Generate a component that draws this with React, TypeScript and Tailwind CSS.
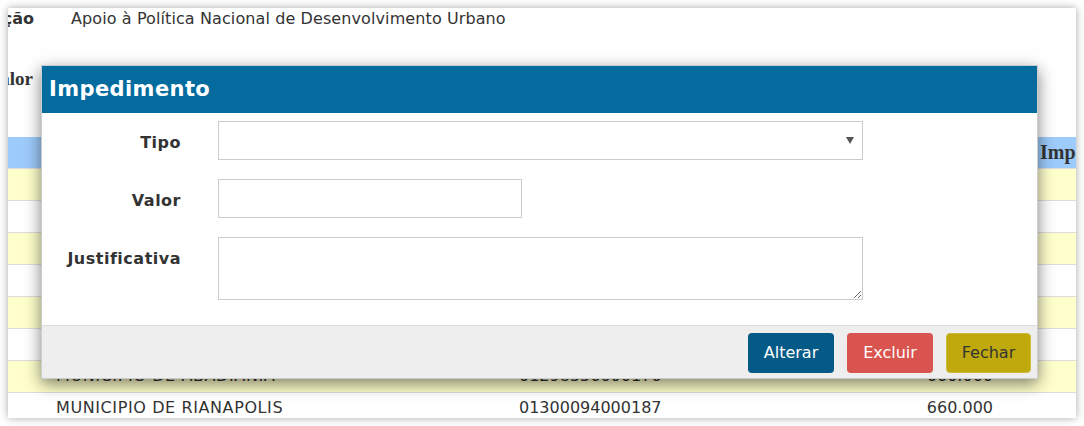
import React from "react";

const rows = [
  { nome: "MUNICIPIO DE ANAPOLIS", cnpj: "01067479000146", valor: "660.000" },
  { nome: "MUNICIPIO DE GOIANIA", cnpj: "01612092000123", valor: "660.000" },
  { nome: "MUNICIPIO DE APARECIDA", cnpj: "01005727000124", valor: "660.000" },
  { nome: "MUNICIPIO DE ITUMBIARA", cnpj: "02204455000199", valor: "660.000" },
  { nome: "MUNICIPIO DE JATAI", cnpj: "01164292000160", valor: "660.000" },
  { nome: "MUNICIPIO DE CATALAO", cnpj: "01505643000150", valor: "660.000" },
  { nome: "MUNICIPIO DE ABADIANIA", cnpj: "01298556000176", valor: "660.000" },
  { nome: "MUNICIPIO DE RIANAPOLIS", cnpj: "01300094000187", valor: "660.000" },
];

function Modal() {
  const label =
    "w-[139px] h-[39px] pt-[4px] flex items-center justify-end font-bold text-[16px] tracking-[0.5px]";
  return (
    <div className="absolute left-[41px] top-[65px] w-[997px] h-[314px] flex flex-col bg-white border border-black/20 shadow-[0_5px_15px_rgba(0,0,0,0.5)]">
      <div className="h-[47px] shrink-0 bg-[#046b9f] flex items-center pl-[7px]">
        <span className="text-white font-bold text-[21px] tracking-[0.4px]">Impedimento</span>
      </div>
      <div className="flex-1 pt-[8px] flex flex-col gap-[19px]">
        <div className="flex">
          <label className={label}>Tipo</label>
          <div className="ml-[37px] w-[645px] h-[39px] border border-[#ccc] bg-white flex items-center justify-end pr-[8px]">
            <svg width="8" height="7" viewBox="0 0 8 7">
              <path d="M0 0 H8 L4 7 Z" fill="#555" />
            </svg>
          </div>
        </div>
        <div className="flex">
          <label className={label}>Valor</label>
          <input className="ml-[37px] w-[304px] h-[39px] border border-[#ccc] outline-none" />
        </div>
        <div className="flex">
          <label className={label}>Justificativa</label>
          <textarea className="ml-[37px] w-[645px] h-[63px] border border-[#ccc] outline-none" />
        </div>
      </div>
      <div className="h-[53px] shrink-0 bg-[#eeeeee] border-t border-[#dddddd] flex justify-end items-start pt-[7px] pr-[6px] text-[16px]">
        <button className="w-[86px] h-[40px] rounded-[4px] bg-[#045a86] text-white">Alterar</button>
        <button className="ml-[13px] w-[86px] h-[40px] rounded-[4px] bg-[#d9534f] text-white">Excluir</button>
        <button className="ml-[13px] w-[85px] h-[40px] rounded-[4px] bg-[#bfa90c] border border-[#cdbb3a] text-[#333]">
          Fechar
        </button>
      </div>
    </div>
  );
}

export default function App() {
  return (
    <div className="relative w-[1084px] h-[426px] bg-white p-2 text-[#333] font-['DejaVu_Sans',sans-serif]">
      <div className="w-[1068px] h-[410px] overflow-hidden bg-white shadow-[0_0_8px_rgba(0,0,0,0.35)]">
        <div className="flex h-[22px] items-center">
          <div className="w-[26px] flex justify-end shrink-0">
            <span className="font-bold text-[16px] whitespace-nowrap">Ação</span>
          </div>
          <span className="ml-[37px] text-[16px] tracking-[0.1px] whitespace-nowrap">
            Apoio à Política Nacional de Desenvolvimento Urbano
          </span>
        </div>
        <div className="flex h-[22px] items-center mt-[38px]">
          <div className="w-[25px] flex justify-end shrink-0">
            <span className="font-bold text-[19px] whitespace-nowrap font-['Liberation_Serif',serif]">Valor</span>
          </div>
        </div>
        <table className="mt-[47px] w-[1140px] border-collapse text-[16px] table-fixed">
          <thead>
            <tr className="h-[31px] bg-[#9dcbfb] font-['Liberation_Serif',serif] font-bold text-[20px]">
              <th className="w-[48px]"></th>
              <th className="w-[463px] text-left">Proponente</th>
              <th className="w-[480px] text-left">CNPJ</th>
              <th className="w-[41px]"></th>
              <th className="text-left">Impedimento</th>
            </tr>
          </thead>
          <tbody>
            {rows.map((r, i) => (
              <tr
                key={i}
                className={
                  i % 2 === 0
                    ? "h-[32px] bg-[#ffffcc] border-t border-[#dddddd]"
                    : "h-[32px] bg-white border-t border-[#dddddd]"
                }
              >
                <td></td>
                <td className="whitespace-nowrap tracking-[0.6px]">{r.nome}</td>
                <td className="whitespace-nowrap">
                  <div className="flex justify-between">
                    <span>{r.cnpj}</span>
                    <span className="mr-[6px]">{r.valor}</span>
                  </div>
                </td>
                <td></td>
                <td></td>
              </tr>
            ))}
          </tbody>
        </table>
      </div>
      <Modal />
    </div>
  );
}
